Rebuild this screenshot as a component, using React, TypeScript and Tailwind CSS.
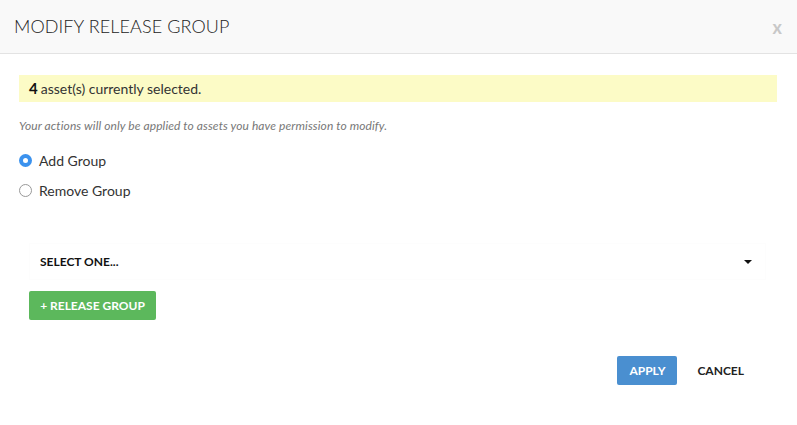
import { useState } from 'react'

export default function App() {
  const [mode, setMode] = useState<'add' | 'remove'>('add')

  return (
    <div className="w-[797px] h-[425px] bg-white text-[#333] font-['Lato','Liberation_Sans',sans-serif]">
      <div className="h-[54px] bg-[#f9f9f9] border-b border-[#e3e3e3] flex items-center justify-between pl-[14px] pr-[15px]">
        <h1 className="text-[18px] font-light tracking-[0.1px] text-[#222]">MODIFY RELEASE GROUP</h1>
        <button className="text-[18px] font-bold text-[#c8c8c8] leading-none">x</button>
      </div>

      <div className="pl-[19px] pr-[20px]">
        <div className="mt-[21px] h-[27px] bg-[#fcfbc6] flex items-center px-[10px] text-[14px]">
          <span className="font-bold text-[15px] text-[#111] mr-[3px]">4</span>
          asset(s) currently selected.
        </div>

        <p className="mt-[16px] text-[12px] italic text-[#777] leading-[15px] tracking-[0.1px]">
          Your actions will only be applied to assets you have permission to modify.
        </p>

        <div className="mt-[19px] flex flex-col gap-[13px]">
          <label className="flex items-center gap-[7px] text-[14px] leading-[17px] cursor-pointer" onClick={() => setMode('add')}>
            {mode === 'add' ? (
              <span className="w-[13px] h-[13px] rounded-full bg-[#3b92ee] flex items-center justify-center">
                <span className="w-[5px] h-[5px] rounded-full bg-white" />
              </span>
            ) : (
              <span className="w-[13px] h-[13px] rounded-full border border-[#999] bg-white" />
            )}
            Add Group
          </label>
          <label className="flex items-center gap-[7px] text-[14px] leading-[17px] cursor-pointer" onClick={() => setMode('remove')}>
            {mode === 'remove' ? (
              <span className="w-[13px] h-[13px] rounded-full bg-[#3b92ee] flex items-center justify-center">
                <span className="w-[5px] h-[5px] rounded-full bg-white" />
              </span>
            ) : (
              <span className="w-[13px] h-[13px] rounded-full border border-[#999] bg-white" />
            )}
            Remove Group
          </label>
        </div>

        <div className="ml-[10px] mr-[11px] mt-[44px] h-[37px] border border-[#fdfdfd] flex items-center justify-between pl-[10px] pr-[13px]">
          <span className="text-[12px] font-bold text-[#111]">SELECT ONE...</span>
          <span className="w-0 h-0 border-l-[4px] border-r-[4px] border-t-[4px] border-l-transparent border-r-transparent border-t-[#111]" />
        </div>

        <button className="ml-[10px] mt-[11px] h-[29px] w-[127px] rounded-[2px] bg-[#5cb85c] text-white text-[12px] font-bold">
          + RELEASE GROUP
        </button>

        <div className="mt-[36px] flex justify-end pr-[13px]">
          <button className="h-[29px] w-[60px] rounded-[2px] bg-[#4a8fd0] text-white text-[12px] font-bold">APPLY</button>
          <button className="h-[29px] px-[20px] text-[12px] font-bold text-[#222]">CANCEL</button>
        </div>
      </div>
    </div>
  )
}
